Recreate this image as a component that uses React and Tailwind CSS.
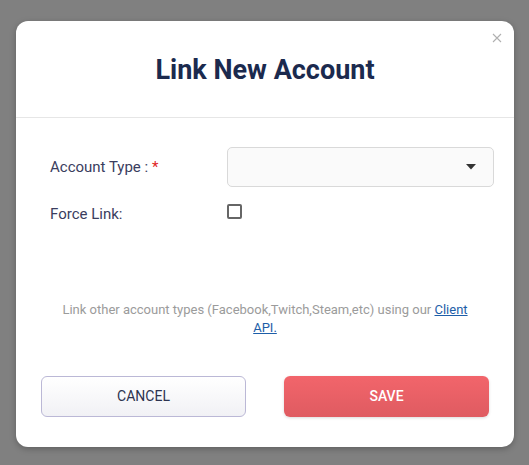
import { useState } from 'react';

export default function App() {
  const [forceLink, setForceLink] = useState(false);

  return (
    <div
      className="min-h-[465px] w-full bg-[#808080] pt-[21px] pl-[16px]"
      style={{ fontFamily: 'Roboto, "Liberation Sans", sans-serif' }}
    >
      <div className="relative w-[498px] h-[426px] rounded-[12px] bg-white shadow-[0_2px_6px_rgba(0,0,0,0.25)] flex flex-col">
        <button className="absolute top-[10px] right-[10px] w-[14px] h-[14px] flex items-center justify-center text-[#b0b0b0]">
          <svg width="10" height="10" viewBox="0 0 10 10" fill="none" stroke="currentColor" strokeWidth="1.1">
            <path d="M1 1L9 9M9 1L1 9" />
          </svg>
        </button>

        <div className="h-[97px] pt-[2px] flex items-center justify-center border-b border-[#e6e6e6]">
          <h1 className="text-[27px] font-bold text-[#1b2a4e] leading-none">Link New Account</h1>
        </div>

        <div className="pt-[29px] pl-[34px] pr-[20px]">
          <div className="flex items-center h-[40px]">
            <label className="w-[177px] text-[15px] text-[#3a3d5e]">
              Account Type : <span className="text-[#e02424]">*</span>
            </label>
            <div className="flex-1 h-[40px] rounded-[5px] border border-[#d9d9d9] bg-[#fafafa] flex items-center justify-end pr-[17px]">
              <svg width="10" height="6" viewBox="0 0 10 6">
                <path d="M0 0H10L5 5.5Z" fill="#333" />
              </svg>
            </div>
          </div>

          <div className="flex items-start mt-[17px]">
            <label className="w-[177px] text-[15px] leading-[20px] text-[#3a3d5e]">Force Link:</label>
            <button
              onClick={() => setForceLink(!forceLink)}
              className="w-[15px] h-[15px] rounded-[2px] border-2 border-[#666] bg-white"
            />
          </div>
        </div>

        <div className="mt-[77px] px-[40px] text-center text-[13px] leading-[18px] text-[#9b9b9b]">
          Link other account types (Facebook,Twitch,Steam,etc) using our{' '}
          <a href="#" className="text-[#1d5ea8] underline">Client API.</a>
        </div>

        <div className="mt-[39px] px-[25px] flex justify-between">
          <button className="w-[205px] h-[41px] rounded-[6px] border border-[#bbb8d6] bg-gradient-to-b from-white to-[#f1f1f5] text-[14px] text-[#2d3350]">
            CANCEL
          </button>
          <button className="w-[205px] h-[41px] rounded-[6px] bg-gradient-to-b from-[#f2656b] to-[#df5b61] text-[14px] font-medium text-white shadow-[0_1px_3px_rgba(0,0,0,0.15)]">
            SAVE
          </button>
        </div>
      </div>
    </div>
  );
}
